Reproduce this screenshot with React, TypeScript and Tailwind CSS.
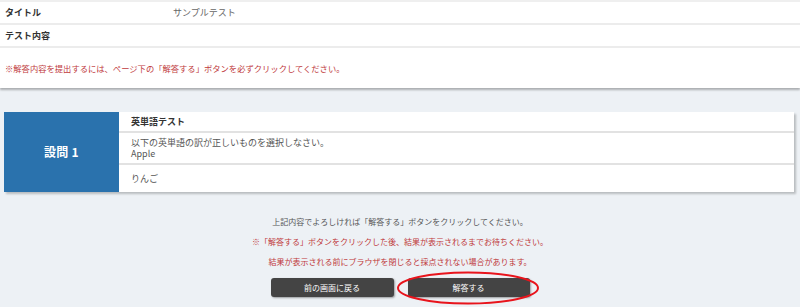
import React from "react"

const font = "font-['Noto_Sans_CJK_JP','Noto_Sans',sans-serif]"

const App = () => {
  return (
    <div className={`w-[800px] h-[307px] overflow-hidden bg-[#edf1f5] ${font}`}>
      {/* header info */}
      <div className="bg-white border-t-2 border-[#efefef] shadow-[0_2px_2px_rgba(0,0,0,0.28)]">
        <div className="h-[23px] flex items-center px-[5px] border-b-2 border-[#ececec]">
          <span className="w-[168px] text-[9px] font-bold text-[#333]">タイトル</span>
          <span className="text-[9px] text-[#666]">サンプルテスト</span>
        </div>
        <div className="h-[23px] flex items-center px-[5px] border-b-2 border-[#ececec]">
          <span className="text-[9px] font-bold text-[#333]">テスト内容</span>
        </div>
        <div className="h-[40px] flex items-center px-[5px]">
          <p className="text-[8.3px] text-[#c0393b]">
            ※解答内容を提出するには、ページ下の「解答する」ボタンを必ずクリックしてください。
          </p>
        </div>
      </div>

      {/* question card */}
      <div className="mt-[24px] ml-[4px] w-[790px] h-[80px] flex bg-white shadow-[2px_2px_2px_rgba(0,0,0,0.22)]">
        <div className="w-[115px] bg-[#2a72ad] flex items-center justify-center">
          <span className="text-[12px] font-bold text-white tracking-wide">設問 1</span>
        </div>
        <div className="flex-1 flex flex-col text-[9px] text-[#555]">
          <div className="h-[21px] flex items-center pl-[12px] border-b-2 border-[#e2e2e2] font-bold text-[#333]">
            英単語テスト
          </div>
          <div className="h-[32px] flex flex-col justify-center pl-[12px] border-b-2 border-[#e2e2e2] leading-[11px]">
            <span>以下の英単語の訳が正しいものを選択しなさい。</span>
            <span>Apple</span>
          </div>
          <div className="flex-1 flex items-center pl-[12px]">りんご</div>
        </div>
      </div>

      {/* submit area */}
      <div className="mt-[20px] flex flex-col items-center text-[8px]">
        <p className="h-[20px] leading-[20px] text-[#555]">上記内容でよろしければ「解答する」ボタンをクリックしてください。</p>
        <p className="h-[20px] leading-[20px] text-[#c0393b]">※「解答する」ボタンをクリックした後、結果が表示されるまでお待ちください。</p>
        <p className="h-[19px] leading-[19px] text-[#c0393b]">結果が表示される前にブラウザを閉じると採点されない場合があります。</p>
        <div className="mt-[7px] flex gap-[14px]">
          <button className="w-[123px] h-[19px] rounded-[3px] bg-[#444] text-white text-[8px] shadow-[1px_1px_2px_rgba(0,0,0,0.35)]">
            前の画面に戻る
          </button>
          <div className="relative">
            <button className="w-[122px] h-[19px] rounded-[3px] bg-[#444] text-white text-[8px] shadow-[1px_1px_2px_rgba(0,0,0,0.35)]">
              解答する
            </button>
            <svg
              className="absolute left-[-12px] top-[-7px] pointer-events-none"
              width="144"
              height="34"
              viewBox="0 0 144 34"
            >
              <ellipse cx="72" cy="17" rx="70" ry="15.5" fill="none" stroke="#e8141c" strokeWidth="2" />
            </svg>
          </div>
        </div>
      </div>
    </div>
  )
}

export default App
